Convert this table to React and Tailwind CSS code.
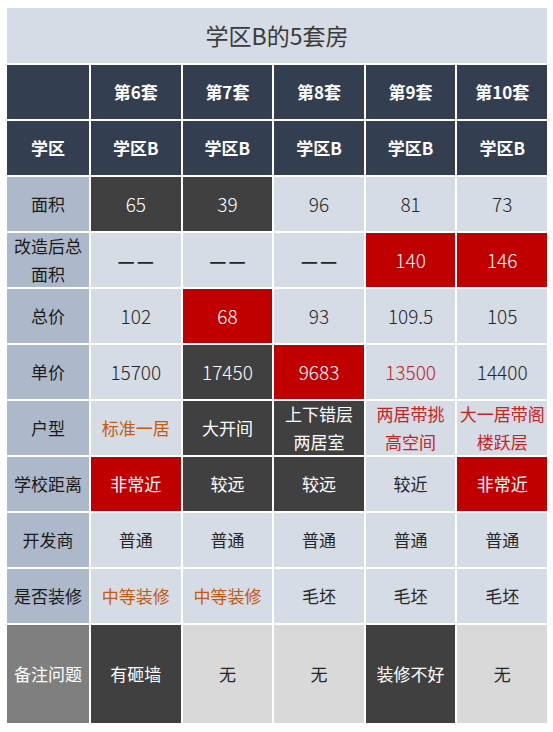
import React from "react";

const L = "bg-[#d6dce5] text-[#262626]";
const D = "bg-[#404040] text-white";
const R = "bg-[#c00000] text-white";
const O = "bg-[#d6dce5] text-[#c55a11]";
const RT = "bg-[#d6dce5] text-[#c9211e]";
const G = "bg-[#d9d9d9] text-[#262626]";

const rows = [
  { label: "面积", cells: [["65", D], ["39", D], ["96", L], ["81", L], ["73", L]] },
  { label: "改造后总\n面积", cells: [["——", L], ["——", L], ["——", L], ["140", R], ["146", R]] },
  { label: "总价", cells: [["102", L], ["68", R], ["93", L], ["109.5", L], ["105", L]] },
  { label: "单价", cells: [["15700", L], ["17450", D], ["9683", R], ["13500", RT], ["14400", L]] },
  { label: "户型", cells: [["标准一居", O], ["大开间", D], ["上下错层\n两居室", D], ["两居带挑\n高空间", RT], ["大一居带阁\n楼跃层", RT]] },
  { label: "学校距离", cells: [["非常近", R], ["较远", D], ["较远", D], ["较近", L], ["非常近", R]] },
  { label: "开发商", cells: [["普通", L], ["普通", L], ["普通", L], ["普通", L], ["普通", L]] },
  { label: "是否装修", cells: [["中等装修", O], ["中等装修", O], ["毛坯", L], ["毛坯", L], ["毛坯", L]] },
];

const Cell = ({ children, className }) => (
  <div className={`flex items-center justify-center text-center whitespace-pre-line leading-[28px] ${className}`}>
    {children}
  </div>
);

// numbers and dashes are set a bit larger and lighter than the Chinese text
const Value = ({ t }) => {
  if (t === "——")
    return (
      <span className="flex gap-[2px] text-[19px] font-bold">
        <span>—</span>
        <span>—</span>
      </span>
    );
  if (/^[0-9.]+$/.test(t)) return <span className="text-[19px] font-light">{t}</span>;
  return t;
};

export default function App() {
  return (
    <div className="bg-white w-[553px] h-[732px] pt-[8px] pl-[7px]" style={{ fontFamily: '"Noto Sans CJK SC", "Noto Sans", sans-serif' }}>
      <div className="w-[540px] flex flex-col gap-[2px]">
        <div className="h-[55px] bg-[#d6dce5] flex items-center justify-center text-[23px] text-[#3a3a3a]">
          学区B的5套房
        </div>
        <div className="grid grid-cols-[82px_repeat(5,1fr)] gap-[2px] text-[17px]">
          <div className="h-[54px] bg-[#333f50]"></div>
          {["第6套", "第7套", "第8套", "第9套", "第10套"].map((t) => (
            <Cell key={t} className="h-[54px] bg-[#333f50] text-white font-bold">{t}</Cell>
          ))}
          <Cell className="h-[54px] bg-[#333f50] text-white font-bold">学区</Cell>
          {[0, 1, 2, 3, 4].map((i) => (
            <Cell key={i} className="h-[54px] bg-[#333f50] text-white font-bold">学区B</Cell>
          ))}
          {rows.map((r) => (
            <React.Fragment key={r.label}>
              <Cell className="h-[54px] bg-[#adb9ca] text-[#1a1a1a]">{r.label}</Cell>
              {r.cells.map(([t, c], i) => (
                <Cell key={i} className={`h-[54px] ${c}`}><Value t={t} /></Cell>
              ))}
            </React.Fragment>
          ))}
          <Cell className="h-[98px] bg-[#7f7f7f] text-white">备注问题</Cell>
          <Cell className={`h-[98px] ${D}`}>有砸墙</Cell>
          <Cell className={`h-[98px] ${G}`}>无</Cell>
          <Cell className={`h-[98px] ${G}`}>无</Cell>
          <Cell className={`h-[98px] ${D}`}>装修不好</Cell>
          <Cell className={`h-[98px] ${G}`}>无</Cell>
        </div>
      </div>
    </div>
  );
}
